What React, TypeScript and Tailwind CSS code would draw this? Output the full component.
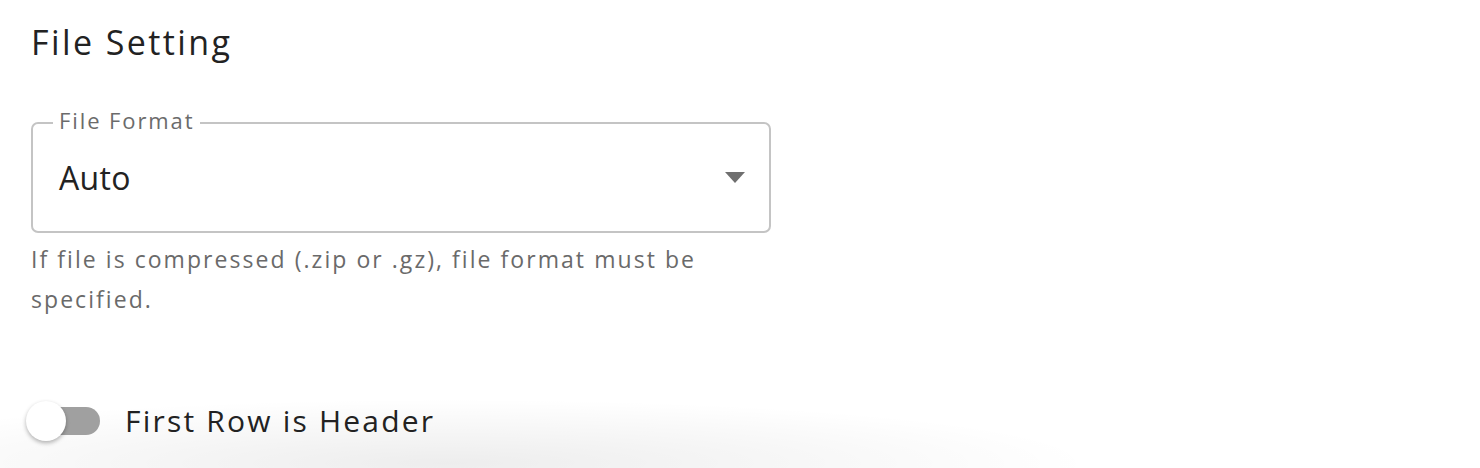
import { useState } from "react";

function FormatSelect() {
  return (
    <div className="w-[740px]">
      <div className="relative flex h-[111px] items-center justify-between rounded-[7px] border-2 border-[#c4c4c4] pl-[26px] pr-[24px]">
        <span className="absolute left-[20px] top-[-16px] bg-white px-[6px] text-[22px] leading-[24px] tracking-[1.9px] text-[#6b6b6b]">
          File Format
        </span>
        <span className="text-[32px] tracking-[0.3px] text-[#222]">Auto</span>
        <svg width="20" height="11" viewBox="0 0 20 11">
          <path d="M0 0 L20 0 L10 11 Z" fill="#6f6f6f" />
        </svg>
      </div>
      <p className="mt-[6px] w-[720px] text-[23px] leading-[40px] tracking-[2.05px] text-[#6a6a6a]">
        If file is compressed (.zip or .gz), file format must be specified.
      </p>
    </div>
  );
}

function HeaderToggle() {
  const [on, setOn] = useState(false);
  return (
    <label className="flex cursor-pointer items-center gap-[25px]" onClick={() => setOn(!on)}>
      <span className="relative block h-[28px] w-[69px] rounded-full bg-[#a0a0a0]">
        <span
          className={
            on
              ? "absolute left-[35px] top-[-6px] h-[40px] w-[40px] rounded-full bg-white shadow-[0_2px_4px_rgba(0,0,0,0.3)]"
              : "absolute left-[-5px] top-[-6px] h-[40px] w-[40px] rounded-full bg-white shadow-[0_2px_4px_rgba(0,0,0,0.3)]"
          }
        />
      </span>
      <span className="text-[30px] leading-[40px] tracking-[2.2px] text-[#222]">First Row is Header</span>
    </label>
  );
}

export default function App() {
  return (
    <div className="relative h-[468px] w-[1480px] overflow-hidden bg-white pl-[31px] pt-[20px] font-['Open_Sans',sans-serif]">
      {/* shadow of the card sitting below the fold */}
      <div className="absolute bottom-[-60px] left-[-200px] h-[130px] w-[1300px] rounded-[50%] bg-[radial-gradient(ellipse_at_center,rgba(0,0,0,0.07),rgba(0,0,0,0)_70%)]" />
      <div className="relative">
        <h1 className="text-[34px] leading-[44px] tracking-[2.4px] text-[#222]">File Setting</h1>
        <div className="mt-[58px]">
          <FormatSelect />
        </div>
        <div className="mt-[82px]">
          <HeaderToggle />
        </div>
      </div>
    </div>
  );
}
